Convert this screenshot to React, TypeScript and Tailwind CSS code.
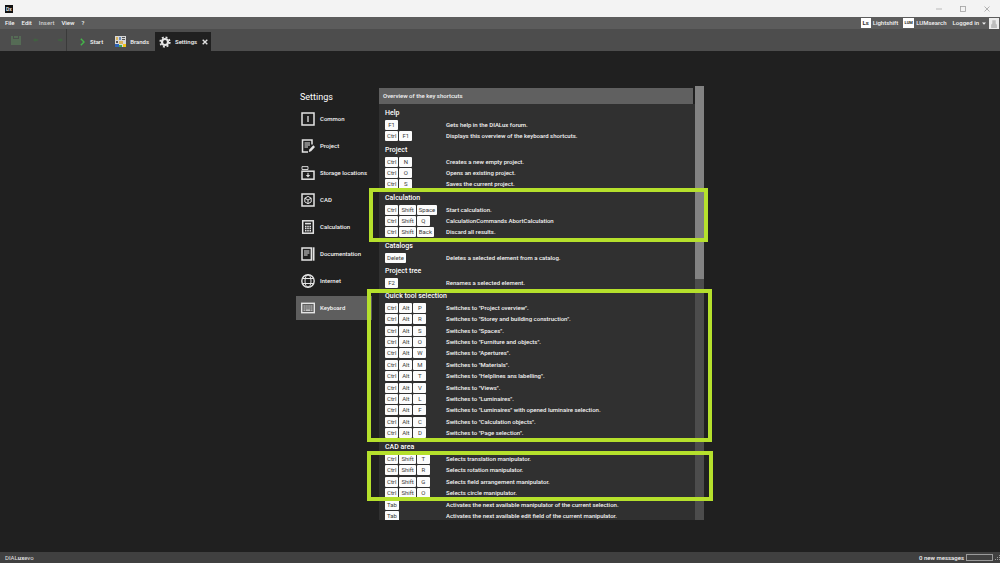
import { ReactNode } from "react";

interface Shortcut {
  keys: string[];
  text: string;
}

interface ShortcutGroup {
  title: string;
  height: string;
  rows: Shortcut[];
}

const GROUPS: ShortcutGroup[] = [
  {
    title: "Help",
    height: "h-[23px]",
    rows: [
      { keys: ["F1"], text: "Gets help in the DIALux forum." },
      { keys: ["Ctrl", "F1"], text: "Displays this overview of the keyboard shortcuts." },
    ],
  },
  {
    title: "Project",
    height: "h-[34px]",
    rows: [
      { keys: ["Ctrl", "N"], text: "Creates a new empty project." },
      { keys: ["Ctrl", "O"], text: "Opens an existing project." },
      { keys: ["Ctrl", "S"], text: "Saves the current project." },
    ],
  },
  {
    title: "Calculation",
    height: "h-[34px]",
    rows: [
      { keys: ["Ctrl", "Shift", "Space"], text: "Start calculation." },
      { keys: ["Ctrl", "Shift", "Q"], text: "CalculationCommands AbortCalculation" },
      { keys: ["Ctrl", "Shift", "Back"], text: "Discard all results." },
    ],
  },
  {
    title: "Catalogs",
    height: "h-[11px]",
    rows: [{ keys: ["Delete"], text: "Deletes a selected element from a catalog." }],
  },
  {
    title: "Project tree",
    height: "h-[11px]",
    rows: [{ keys: ["F2"], text: "Renames a selected element." }],
  },
  {
    title: "Quick tool selection",
    height: "h-[137px]",
    rows: [
      { keys: ["Ctrl", "Alt", "P"], text: 'Switches to "Project overview".' },
      { keys: ["Ctrl", "Alt", "R"], text: 'Switches to "Storey and building construction".' },
      { keys: ["Ctrl", "Alt", "S"], text: 'Switches to "Spaces".' },
      { keys: ["Ctrl", "Alt", "O"], text: 'Switches to "Furniture and objects".' },
      { keys: ["Ctrl", "Alt", "W"], text: 'Switches to "Apertures".' },
      { keys: ["Ctrl", "Alt", "M"], text: 'Switches to "Materials".' },
      { keys: ["Ctrl", "Alt", "T"], text: 'Switches to "Helplines ans labelling".' },
      { keys: ["Ctrl", "Alt", "V"], text: 'Switches to "Views".' },
      { keys: ["Ctrl", "Alt", "L"], text: 'Switches to "Luminaires".' },
      { keys: ["Ctrl", "Alt", "F"], text: 'Switches to "Luminaires" with opened luminaire selection.' },
      { keys: ["Ctrl", "Alt", "C"], text: 'Switches to "Calculation objects".' },
      { keys: ["Ctrl", "Alt", "D"], text: 'Switches to "Page selection".' },
    ],
  },
  {
    title: "CAD area",
    height: "h-[69px]",
    rows: [
      { keys: ["Ctrl", "Shift", "T"], text: "Selects translation manipulator." },
      { keys: ["Ctrl", "Shift", "R"], text: "Selects rotation manipulator." },
      { keys: ["Ctrl", "Shift", "G"], text: "Selects field arrangement manipulator." },
      { keys: ["Ctrl", "Shift", "O"], text: "Selects circle manipulator." },
      { keys: ["Tab"], text: "Activates the next available manipulator of the current selection." },
      { keys: ["Tab"], text: "Activates the next available edit field of the current manipulator." },
    ],
  },
];

function LineIcon({ children }: { children: ReactNode }) {
  return (
    <svg
      viewBox="0 0 14 14"
      className="size-[14px] shrink-0"
      fill="none"
      stroke="#e4e4e4"
      strokeWidth="1"
      aria-hidden="true"
    >
      {children}
    </svg>
  );
}

const NAV: { label: string; icon: ReactNode }[] = [
  {
    label: "Common",
    icon: (
      <>
        <rect x="1" y="1" width="12" height="12" strokeWidth="1.5" />
        <path d="M7 4v6" strokeWidth="1.3" />
      </>
    ),
  },
  {
    label: "Project",
    icon: (
      <>
        <path d="M11 5.5V1H1.5v12H7" strokeWidth="1.5" />
        <path d="M3.5 4H9M3.5 6H9M3.5 8H7" />
        <path d="M7.8 13l.5-2.6 4-4.2 1.7 1.7-3.900 4.300z" fill="#e4e4e4" stroke="none" />
      </>
    ),
  },
  {
    label: "Storage locations",
    icon: (
      <>
        <path d="M1 3.500V.6h6v2.900z" strokeWidth=".9" />
        <rect x="1" y="5.200" width="12" height="8" strokeWidth="1.5" />
        <path d="M7 6.8v2.500" />
        <path d="M4.8 9h4.4L7 11.5z" fill="#e4e4e4" stroke="none" />
      </>
    ),
  },
  {
    label: "CAD",
    icon: (
      <>
        <rect x="1" y="1" width="12" height="12" strokeWidth="1.5" />
        <path d="M7 3.4l3.2 1.8v3.7L7 10.7 3.8 8.9V5.2zM3.8 5.2L7 7l3.2-1.8M7 7v3.7" />
      </>
    ),
  },
  {
    label: "Calculation",
    icon: (
      <>
        <rect x="1.7" y=".8" width="10.6" height="12.4" strokeWidth="1.5" />
        <path d="M4 3.6h6" strokeWidth="1.6" />
        <path d="M4 6.5h6M4 8.6h6M4 10.7h6" strokeWidth="1.5" strokeDasharray="1.5 .75" />
      </>
    ),
  },
  {
    label: "Documentation",
    icon: (
      <>
        <path d="M1 1h9.4v12H1z" strokeWidth="1.5" />
        <path d="M3 4h5.4M3 6h5.4M3 8h3.6" />
        <path d="M12.600 .3v13.400" strokeWidth="1.8" />
      </>
    ),
  },
  {
    label: "Internet",
    icon: (
      <>
        <circle cx="7" cy="7" r="6.2" strokeWidth="1.4" />
        <ellipse cx="7" cy="7" rx="3" ry="6.2" />
        <path d="M1.6 4.5h10.8M1.6 9.5h10.8" />
      </>
    ),
  },
  {
    label: "Keyboard",
    icon: (
      <>
        <rect x=".7" y="2.3" width="12.6" height="9.4" strokeWidth="1.4" />
        <path d="M2.6 5h9M2.6 7h9" strokeWidth="1.200" strokeDasharray="1.2 .7" />
        <path d="M2.6 9.2h1.2M4.6 9.2h4.8M10.2 9.2h1.2" strokeWidth="1.200" />
      </>
    ),
  },
];

function Key({ label }: { label: string }) {
  return (
    <kbd className="flex h-[10px] min-w-[13px] items-center justify-center rounded-[1px] bg-[#fcfcfc] px-[2px] font-[inherit] text-[6px] leading-[10px] font-normal text-[#3a3a3a]">
      {label}
    </kbd>
  );
}

function Group({ title, height, rows }: ShortcutGroup) {
  return (
    <section>
      <h2 className="h-[14px] pt-[2px] text-[7px] leading-[12px] text-white">{title}</h2>
      <table aria-label={title} className={`w-full border-collapse ${height}`}>
        <tbody>
          {rows.map((row) => (
            <tr key={row.text}>
              <td className="w-[61px] p-0 align-middle">
                <div className="flex gap-px">
                  {row.keys.map((key) => (
                    <Key key={key} label={key} />
                  ))}
                </div>
              </td>
              <td className="p-0 align-middle leading-[10px] whitespace-nowrap">{row.text}</td>
            </tr>
          ))}
        </tbody>
      </table>
    </section>
  );
}

function TitleBar() {
  return (
    <header className="flex h-[17px] shrink-0 items-center justify-between bg-[#f3f3f3] pr-[10px] pl-[5px]">
      <span className="flex size-[8px] items-center justify-center bg-[#111] text-[5px] leading-[8px] text-white">Dx</span>
      <div className="flex gap-[18px] text-[#a0a0a0]">
        <button aria-label="Minimize">
          <svg viewBox="0 0 6 6" className="size-[6px]" stroke="currentColor" strokeWidth=".7"><path d="M0 3h6" /></svg>
        </button>
        <button aria-label="Maximize">
          <svg viewBox="0 0 6 6" className="size-[6px]" fill="none" stroke="currentColor" strokeWidth=".8"><rect x=".5" y=".5" width="5" height="5" /></svg>
        </button>
        <button aria-label="Close">
          <svg viewBox="0 0 6 6" className="size-[6px]" stroke="currentColor" strokeWidth=".8"><path d="M.5.5l5 5M5.5.5l-5 5" /></svg>
        </button>
      </div>
    </header>
  );
}

function MenuBar() {
  return (
    <nav className="flex h-[12px] shrink-0 items-center justify-between bg-[#5c5c5c] pl-[5px]">
      <div className="flex gap-[7px]">
        <button>File</button>
        <button>Edit</button>
        <button className="text-[#d0d0d0]">Insert</button>
        <button>View</button>
        <button>?</button>
      </div>
      <div className="flex items-center">
        <button className="flex items-center gap-[2px]">
          <span className="flex h-[10px] w-[10px] items-center justify-center bg-white text-[6px] leading-[10px] font-bold text-[#333]">Ls</span>
          Lightshift
        </button>
        <button className="ml-[5px] flex items-center gap-[2px]">
          <span className="flex h-[10px] w-[11px] items-center justify-center bg-white text-[4px] leading-[10px] font-bold text-[#222]">LUM</span>
          LUMsearch
        </button>
        <button className="ml-[6px] flex items-center gap-[3px]">
          Logged in
          <svg viewBox="0 0 4 3" className="h-[3px] w-[4px]" fill="#eee"><path d="M0 .5h4L2 2.7z" /></svg>
        </button>
        <svg viewBox="0 0 10 11" className="mr-px ml-[3px] h-[11px] w-[10px]" aria-hidden="true">
          <path fill="#ececec" d="M0 0h10v11H0z" />
          <path fill="#bdbdbd" d="M3.3 2.2h3.4v3.3l1.2 1.2V10H2.1V6.7l1.2-1.2z" />
        </svg>
      </div>
    </nav>
  );
}

function Toolbar() {
  return (
    <div className="flex h-[22px] shrink-0 bg-[#4d4d4d]">
      <div className="flex w-[67px] items-center gap-[12px] border-r border-[#3a3a3a] pl-[11px]">
        <button aria-label="Save">
          <svg viewBox="0 0 10 9" className="h-[9px] w-[10px]"><path fill="#556b55" d="M0 0h2v3h6V0h2v9H0zM3 0h4v2H3z" /></svg>
        </button>
        <button aria-label="Undo">
          <svg viewBox="0 0 5 4" className="h-[4px] w-[5px]"><path fill="#416341" d="M0 2l2.5-2v1.3H5v1.4H2.5V4z" /></svg>
        </button>
        <button aria-label="Redo" className="ml-[8px]">
          <svg viewBox="0 0 5 4" className="h-[4px] w-[5px]"><path fill="#416341" d="M5 2L2.5 0v1.3H0v1.4h2.5V4z" /></svg>
        </button>
      </div>
      <div className="flex pt-[3px]">
        <button className="flex items-center gap-[5px] pl-[13px]">
          <svg viewBox="0 0 5 8" className="h-[8px] w-[5px]" fill="none" stroke="#43b649" strokeWidth="1.4"><path d="M.8.8L4 4 .8 7.2" /></svg>
          Start
        </button>
        <button className="flex items-center gap-[4px] pl-[12px]">
          <svg viewBox="0 0 11 11" className="size-[11px]">
            <path fill="#d8d8d8" d="M0 0h11v11H0z" />
            <path fill="#d9b35c" d="M1 1h2v3H1zM4 5h4v3H4z" />
            <path fill="#6c8fbd" d="M4 1h2v3H4z" />
            <path fill="#2f63b8" d="M0 8h4v3H0z" />
            <path fill="#555" d="M7 1h3v1H7zM7 3h3v1H7zM1 5h2v2H1z" />
            <path fill="#3aa655" d="M4 9h3v2H4z" />
            <path fill="#f0c419" d="M8 8h3v3H8z" />
          </svg>
          Brands
        </button>
        <div className="ml-[6px] flex items-center bg-[#202020] pr-[3px] pl-[4px]">
          <button className="flex items-center gap-[4px]">
            <svg viewBox="0 0 12 12" className="size-[12px]" fill="none" stroke="#e6e6e6">
              <circle cx="6" cy="6" r="3" strokeWidth="2.2" />
              <circle cx="6" cy="6" r="4.8" strokeWidth="1.7" strokeDasharray="1.9 1.87" />
            </svg>
            Settings
          </button>
          <button aria-label="Close Settings" className="ml-[5px]">
            <svg viewBox="0 0 6 6" className="size-[6px]" stroke="#e0e0e0" strokeWidth="1.4"><path d="M.7.7l4.6 4.6M5.3.7L.7 5.3" /></svg>
          </button>
        </div>
      </div>
    </div>
  );
}

function Sidebar() {
  return (
    <aside className="w-[76px] shrink-0 pt-[3px]">
      <h1 className="pl-[4px] text-[9px] leading-[16px] font-normal text-white">Settings</h1>
      <nav className="flex flex-col gap-[3px] pt-[2px]">
        {NAV.map(({ label, icon }) => (
          <a
            key={label}
            href={`#${label.toLowerCase().replace(" ", "-")}`}
            className={`flex h-[24px] items-center gap-[5px] pl-[5px] whitespace-nowrap ${label === "Keyboard" ? "bg-[#5e5e5e]" : ""}`}
          >
            <LineIcon>{icon}</LineIcon>
            {label}
          </a>
        ))}
      </nav>
    </aside>
  );
}

export default function App() {
  return (
    <div className="flex h-screen flex-col bg-[#202020] font-['Roboto',sans-serif] text-[6px] leading-[10px] font-medium text-[#f4f4f4]">
      <TitleBar />
      <MenuBar />
      <Toolbar />
      <main className="flex min-h-0 flex-1 justify-center pt-[35px] pb-[32px]">
        <div className="relative flex w-[408px]">
          <Sidebar />
          <div className="ml-[7px] flex min-w-0 flex-1 flex-col overflow-hidden pt-[2px]">
            <div className="mr-[2px] h-[16px] shrink-0 bg-[#606060] pl-[4px] leading-[16px]">Overview of the key shortcuts</div>
            <div className="min-h-0 flex-1 overflow-hidden bg-[#303030] pt-px pl-[6px]">
              {GROUPS.map((group) => (
                <Group key={group.title} {...group} />
              ))}
            </div>
          </div>
          <div className="w-[9px] shrink-0 bg-[#4c4c4c]">
            <div className="h-[193px] bg-[#828282]" />
          </div>

          {/* highlight frames */}
          <div className="pointer-events-none absolute top-[102px] left-[73px] h-[54px] w-[339px] border-4 border-[#b5e02c]" />
          <div className="pointer-events-none absolute top-[203px] left-[71px] h-[153px] w-[345px] border-4 border-[#b5e02c]" />
          <div className="pointer-events-none absolute top-[365px] left-[71px] h-[50px] w-[346px] border-4 border-[#b5e02c]" />
        </div>
      </main>
      <footer className="flex h-[11px] shrink-0 items-center justify-between bg-[#404040] pl-[5px]">
        <span className="font-normal text-[#e0e0e0]">
          DIAL<b>ux</b>evo
        </span>
        <div className="flex items-center gap-[2px]">
          0 new messages
          <span className="h-[7px] w-[27px] border border-[#9a9a9a]" />
          <svg viewBox="0 0 5 5" className="size-[5px]" fill="#9a9a9a"><path d="M4 0h1v1H4zM2 2h1v1H2zM4 2h1v1H4zM0 4h1v1H0zM2 4h1v1H2zM4 4h1v1H4z" /></svg>
        </div>
      </footer>
    </div>
  );
}
